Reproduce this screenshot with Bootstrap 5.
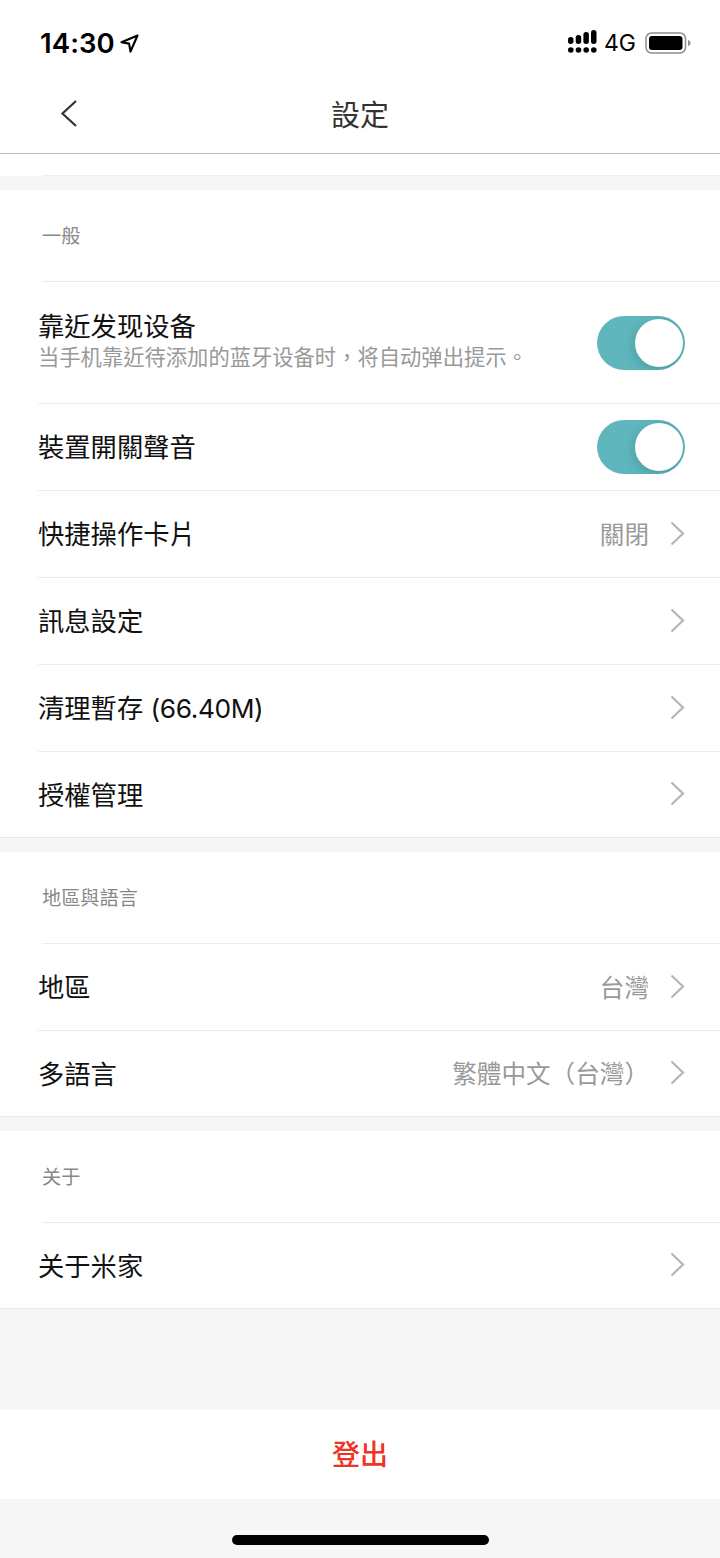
<!DOCTYPE html>
<html lang="zh-Hant">
<head>
<meta charset="utf-8">
<title>設定</title>
<link rel="stylesheet" href="https://cdn.jsdelivr.net/npm/bootstrap@5.3.0/dist/css/bootstrap.min.css">
<style>
html,body{height:1558px;overflow:hidden}
body{background:#f6f6f6;font-family:"Noto Sans CJK TC","Noto Sans CJK SC",sans-serif;color:#000}
.phone-top{background:#fff;height:153px}
.status-bar{height:76px;padding:10px 29px 0 40px}
.clock{font-family:Inter,sans-serif;font-weight:600;font-size:27.5px;line-height:1;letter-spacing:.1px;margin-top:2px}
.net{font-family:Inter,sans-serif;font-size:23px;line-height:1;margin:0 9px 0 7px}
.signal{margin-bottom:3px}
.nav-row{height:77px}
.back-btn{position:absolute;left:60px;top:23px;line-height:0}
.page-title{font-size:29px;color:#333;line-height:1;margin-top:-2px}
.top-rule{height:1px;background:#bbb}
.stub{height:22px;background:#fff;padding-top:21px}
.stub-line{margin-left:42px;height:1px;background:#efefef}
.gap-band{height:14px;background:#f6f6f6}
.settings{background:#fff;border-bottom:1px solid #e8e8e8}
.sec-label{height:92px;margin-left:42px;padding-top:32px;font-size:19.2px;line-height:26px;color:#888;border-bottom:1px solid #ececec}
.item{height:87px;margin-left:38px;padding:0 35px 0 0;border-bottom:1px solid #ececec;border-radius:0;background:transparent}
.item:last-child{border-bottom:0;height:85px}
.item.tall{height:122px}
.item-name{font-family:Inter,"Noto Sans CJK TC","Noto Sans CJK SC",sans-serif;font-size:26.3px;line-height:34px;color:#111;padding-top:2px}
.item-text{padding-bottom:7px}
.item-text .item-name{padding-top:0}
.item-sub{font-size:21.3px;line-height:26px;color:#999;margin-top:-1px}
.item-value{font-size:24.6px;color:#999;line-height:1;margin:0 21px 2px 0}
.latin-tight{letter-spacing:-.4px}
.chev{margin-bottom:2px}
.toggle-track{width:88px;height:54px;border-radius:27px;padding:3px 2px;overflow:hidden;background:linear-gradient(90deg,#5fb6bd 0 60%,#55aab2 85%,#5fb6bd 100%)}
.toggle-knob{width:48px;height:48px;border-radius:50%;background:#fff;box-shadow:-3px 3px 8px rgba(40,110,115,.25)}
.filler{height:101px}
.logout{background:#fff;height:89px;font-size:28px;font-weight:500;color:#f03325;line-height:1;padding-bottom:4px}
.home-bar{width:257px;height:10px;border-radius:5px;background:#000;margin:36px auto 0}
</style>
</head>
<body>
<div class="phone-top">
  <div class="status-bar d-flex align-items-center">
    <span class="clock">14:30</span>
    <svg class="ms-1" width="21" height="19" viewBox="0 0 19 19" aria-hidden="true"><path d="M17.5 1.500 1.500 8.300l7.600 1.300 1.400 7.900z" fill="none" stroke="#000" stroke-width="2.100" stroke-linejoin="round"/></svg>
    <span class="ms-auto d-flex align-items-center">
      <svg class="signal" width="29" height="23" viewBox="0 0 29 23" aria-hidden="true"><g fill="#000"><rect x="0" y="7" width="5.500" height="7" rx="2.700"/><rect x="7.700" y="5" width="5.500" height="9" rx="2.700"/><rect x="15.400" y="2" width="5.500" height="12" rx="2.700"/><rect x="23" y="0" width="5.500" height="14" rx="2.700"/><circle cx="2.800" cy="20" r="2.800"/><circle cx="10.500" cy="20" r="2.800"/><circle cx="18.200" cy="20" r="2.800"/><circle cx="25.800" cy="20" r="2.800"/></g></svg>
      <span class="net">4G</span>
      <svg width="46" height="22" viewBox="0 0 46 22" aria-hidden="true"><rect x="1" y="1" width="39.500" height="20" rx="5.500" fill="none" stroke="#8f8f8f" stroke-width="1.500"/><rect x="4" y="4" width="33.500" height="14" rx="3" fill="#000"/><path d="M43 8c1.500.5 2.500 1.500 2.500 3s-1 2.500-2.500 3z" fill="#8f8f8f"/></svg>
    </span>
  </div>
  <div class="nav-row position-relative d-flex align-items-center justify-content-center">
    <a class="back-btn" href="#" aria-label="back"><svg width="17" height="29" viewBox="0 0 17 29" aria-hidden="true"><path d="M16 2 2.500 14.500 16 27" fill="none" stroke="#333" stroke-width="2.200"/></svg></a>
    <span class="page-title">設定</span>
  </div>
</div>
<div class="top-rule"></div>
<div class="stub"><div class="stub-line"></div></div>
<div class="gap-band"></div>

<section class="settings">
  <div class="sec-label">一般</div>
  <div class="list-group list-group-flush">
    <div class="list-group-item item tall d-flex align-items-center justify-content-between">
      <div class="item-text"><div class="item-name">靠近发现设备</div><div class="item-sub">当手机靠近待添加的蓝牙设备时，将自动弹出提示。</div></div>
      <div class="toggle-track d-flex justify-content-end flex-shrink-0"><div class="toggle-knob"></div></div>
    </div>
    <div class="list-group-item item d-flex align-items-center justify-content-between">
      <div class="item-name">裝置開關聲音</div>
      <div class="toggle-track d-flex justify-content-end flex-shrink-0"><div class="toggle-knob"></div></div>
    </div>
    <div class="list-group-item item d-flex align-items-center">
      <div class="item-name me-auto">快捷操作卡片</div><span class="item-value">關閉</span>
      <svg class="chev" width="15" height="25" viewBox="0 0 15 25" aria-hidden="true"><path d="M1.500 1.500 13 12.500 1.500 23.500" fill="none" stroke="#b5b5b5" stroke-width="2.200"/></svg>
    </div>
    <div class="list-group-item item d-flex align-items-center">
      <div class="item-name me-auto">訊息設定</div>
      <svg class="chev" width="15" height="25" viewBox="0 0 15 25" aria-hidden="true"><path d="M1.500 1.500 13 12.500 1.500 23.500" fill="none" stroke="#b5b5b5" stroke-width="2.200"/></svg>
    </div>
    <div class="list-group-item item d-flex align-items-center">
      <div class="item-name me-auto">清理暫存 <span class="latin-tight">(66.40M)</span></div>
      <svg class="chev" width="15" height="25" viewBox="0 0 15 25" aria-hidden="true"><path d="M1.500 1.500 13 12.500 1.500 23.500" fill="none" stroke="#b5b5b5" stroke-width="2.200"/></svg>
    </div>
    <div class="list-group-item item d-flex align-items-center">
      <div class="item-name me-auto">授權管理</div>
      <svg class="chev" width="15" height="25" viewBox="0 0 15 25" aria-hidden="true"><path d="M1.500 1.500 13 12.500 1.500 23.500" fill="none" stroke="#b5b5b5" stroke-width="2.200"/></svg>
    </div>
  </div>
</section>
<div class="gap-band"></div>

<section class="settings">
  <div class="sec-label">地區與語言</div>
  <div class="list-group list-group-flush">
    <div class="list-group-item item d-flex align-items-center">
      <div class="item-name me-auto">地區</div><span class="item-value">台灣</span>
      <svg class="chev" width="15" height="25" viewBox="0 0 15 25" aria-hidden="true"><path d="M1.500 1.500 13 12.500 1.500 23.500" fill="none" stroke="#b5b5b5" stroke-width="2.200"/></svg>
    </div>
    <div class="list-group-item item d-flex align-items-center">
      <div class="item-name me-auto">多語言</div><span class="item-value">繁體中文（台灣）</span>
      <svg class="chev" width="15" height="25" viewBox="0 0 15 25" aria-hidden="true"><path d="M1.500 1.500 13 12.500 1.500 23.500" fill="none" stroke="#b5b5b5" stroke-width="2.200"/></svg>
    </div>
  </div>
</section>
<div class="gap-band"></div>

<section class="settings">
  <div class="sec-label">关于</div>
  <div class="list-group list-group-flush">
    <div class="list-group-item item d-flex align-items-center">
      <div class="item-name me-auto">关于米家</div>
      <svg class="chev" width="15" height="25" viewBox="0 0 15 25" aria-hidden="true"><path d="M1.500 1.500 13 12.500 1.500 23.500" fill="none" stroke="#b5b5b5" stroke-width="2.200"/></svg>
    </div>
  </div>
</section>
<div class="filler"></div>
<div class="logout d-flex align-items-center justify-content-center">登出</div>
<div class="home-bar"></div>
</body>
</html>
